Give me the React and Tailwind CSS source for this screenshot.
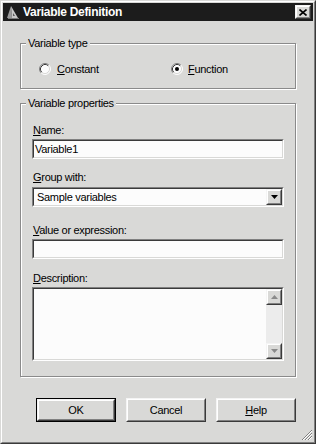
import React from "react";

const face = "bg-[#d9d9d7]";

function Sunken({ className = "", children }) {
  return (
    <div className={`border border-t-[#808080] border-l-[#808080] border-b-[#ffffff] border-r-[#ffffff] ${className}`}>
      <div className="h-full border border-t-[#3a3a3a] border-l-[#3a3a3a] border-b-[#d9d9d7] border-r-[#d9d9d7] bg-[#fcfcfc]">
        {children}
      </div>
    </div>
  );
}

function Raised({ className = "", children }) {
  return (
    <div className={`border border-t-[#f4f4f4] border-l-[#f4f4f4] border-b-[#3a3a3a] border-r-[#3a3a3a] ${face} ${className}`}>
      <div className="h-full flex items-center justify-center border border-t-[#ffffff] border-l-[#ffffff] border-b-[#808080] border-r-[#808080]">
        {children}
      </div>
    </div>
  );
}

function Arrow({ color = "#000", up }) {
  return (
    <svg width="7" height="4" viewBox="0 0 7 4" className={up ? "rotate-180" : ""}>
      <path d="M0 0H7L3.5 4Z" fill={color} />
    </svg>
  );
}

function Radio({ checked }) {
  return (
    <svg width="12" height="12" viewBox="0 0 12 12" className="shrink-0">
      <circle cx="6" cy="6" r="5" fill="#fcfcfc" />
      <path d="M2.11 9.89A5.5 5.5 0 0 1 9.89 2.11" stroke="#808080" fill="none" />
      <path d="M9.89 2.11A5.5 5.5 0 0 1 2.11 9.89" stroke="#ffffff" fill="none" />
      <path d="M2.82 9.18A4.5 4.5 0 0 1 9.18 2.82" stroke="#3a3a3a" fill="none" />
      <path d="M9.18 2.82A4.5 4.5 0 0 1 2.82 9.18" stroke="#d9d9d7" fill="none" />
      {checked && <circle cx="6" cy="6" r="2" fill="#000" />}
    </svg>
  );
}

function U({ children }) {
  return <span className="underline underline-offset-[1px]">{children}</span>;
}

function GroupBox({ title, className = "", children }) {
  return (
    <fieldset
      className={`mx-[17px] border border-[#8a8a8a] shadow-[1px_1px_0_#ffffff,inset_1px_1px_0_#ffffff] ${className}`}
    >
      <legend className={`ml-[5px] px-[2px] leading-[13px] ${face}`}>{title}</legend>
      {children}
    </fieldset>
  );
}

function Field({ label, className = "", children }) {
  return (
    <>
      <div className={`leading-[13px] ml-[1px] ${className}`}>{label}</div>
      {children}
    </>
  );
}

export default function App() {
  return (
    <div
      className={`w-[316px] h-[444px] relative ${face} text-black text-[11px] tracking-[-0.3px] border border-t-[#d9d9d7] border-l-[#d9d9d7] border-b-[#3a3a3a] border-r-[#3a3a3a]`}
      style={{ fontFamily: '"Liberation Sans", Arial, sans-serif' }}
    >
      <div className="h-full border border-t-[#ffffff] border-l-[#ffffff] border-b-[#808080] border-r-[#808080] p-[1px] flex flex-col">
        {/* title bar */}
        <div className="h-[18px] bg-[#1c1c1c] flex items-center pl-[2px] pr-[2px]">
          <svg width="16" height="16" viewBox="0 0 16 16" className="shrink-0">
            <path d="M2 14L6 2L7 14Z" fill="#9a9a9a" />
            <path d="M6 2L13 14H7Z" fill="#c8c8c8" />
            <path d="M3 14H14V15H3Z" fill="#7a7a7a" />
            <path d="M8 9L10 12H8Z" fill="#5a5a5a" />
          </svg>
          <span className="ml-[2px] font-bold text-white text-[12px] tracking-[-0.3px] leading-none">
            Variable Definition
          </span>
          <Raised className="ml-auto w-[16px] h-[14px]">
            <svg width="8" height="7" viewBox="0 0 8 7">
              <path d="M0.5 0.5L7.5 6.5M7.5 0.5L0.5 6.5" stroke="#000" strokeWidth="1.6" />
            </svg>
          </Raised>
        </div>

        <GroupBox title="Variable type" className="mt-[16px] h-[52px]">
          <div className="flex items-center h-[24px] mt-[7px] pl-[18px]">
            <div className="flex items-center gap-[6px] w-[132px]">
              <Radio />
              <span className="leading-[13px]">
                <U>C</U>onstant
              </span>
            </div>
            <div className="flex items-center gap-[5px]">
              <Radio checked />
              <span className="leading-[13px]">
                <U>F</U>unction
              </span>
            </div>
          </div>
        </GroupBox>

        <GroupBox title="Variable properties" className="mt-[8px] pb-[15px]">
          <div className="px-[11px] flex flex-col">
            <Field label={<><U>N</U>ame:</>} className="mt-[14px]">
              <Sunken className="mt-[2px] h-[20px]">
                <div className="pl-[1px] leading-[16px]">Variable1</div>
              </Sunken>
            </Field>
            <Field label={<><U>G</U>roup with:</>} className="mt-[12px]">
              <Sunken className="mt-[3px] h-[20px]">
                <div className="flex h-full items-center">
                  <div className="flex-1 pl-[3px] leading-[16px]">Sample variables</div>
                  <Raised className="w-[16px] h-[16px]">
                    <Arrow />
                  </Raised>
                </div>
              </Sunken>
            </Field>
            <Field label={<><U>V</U>alue or expression:</>} className="mt-[17px]">
              <Sunken className="mt-[2px] h-[20px]" />
            </Field>
            <Field label={<><U>D</U>escription:</>} className="mt-[13px]">
              <Sunken className="mt-[2px] h-[74px]">
                <div className="flex h-full justify-end">
                  <div className="w-[16px] flex flex-col bg-[#ececec]">
                    <Raised className="h-[16px]">
                      <Arrow up color="#8a8a8a" />
                    </Raised>
                    <div className="flex-1" />
                    <Raised className="h-[16px]">
                      <Arrow color="#8a8a8a" />
                    </Raised>
                  </div>
                </div>
              </Sunken>
            </Field>
          </div>
        </GroupBox>

        {/* buttons */}
        <div className="flex gap-[10px] ml-[33px] mt-[21px]">
          <div className="border border-black">
            <Raised className="w-[78px] h-[22px]">OK</Raised>
          </div>
          <Raised className="w-[80px] h-[24px]">Cancel</Raised>
          <Raised className="w-[80px] h-[24px]">
            <span>
              <U>H</U>elp
            </span>
          </Raised>
        </div>

        {/* size grip */}
        <svg width="12" height="12" viewBox="0 0 12 12" className="absolute right-[2px] bottom-[2px]">
          <path d="M11 1L1 11M11 4L4 11M11 7L7 11" stroke="#808080" />
          <path d="M11 2L2 11M11 5L5 11M11 8L8 11" stroke="#ffffff" />
        </svg>
      </div>
    </div>
  );
}
